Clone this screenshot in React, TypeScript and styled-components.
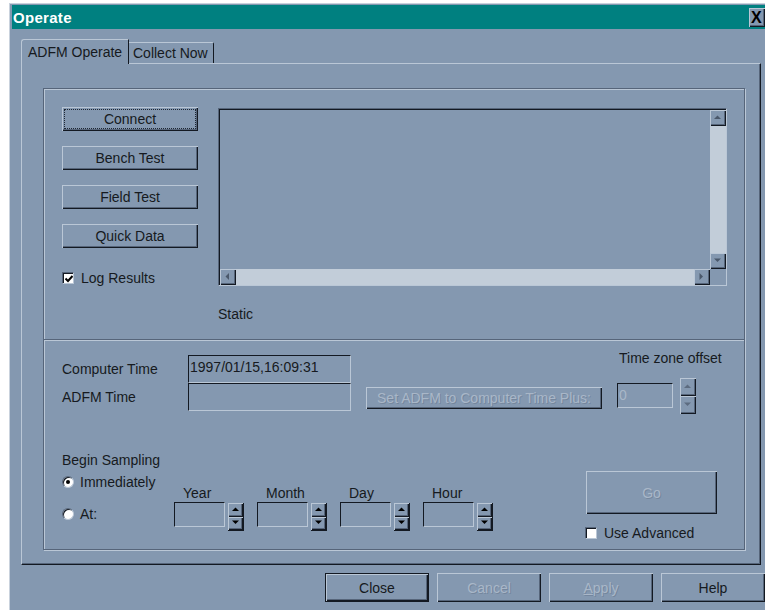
import styled, { createGlobalStyle, css } from "styled-components";

const face = "#8498b0";
const light = "#bac7d6";
const shadow = "#56657a";
const dark = "#131922";
const track = "#c2cdd9";
const grayText = "#a9b7c8";

const GlobalStyle = createGlobalStyle`
  html, body {
    margin: 0;
    background: #fff;
  }
  body {
    font-family: "Liberation Sans", Arial, sans-serif;
    font-size: 14px;
    color: #161a20;
  }
  * {
    box-sizing: border-box;
  }
`;

const raised = css`
  box-shadow: inset 1px 1px 0 ${light}, inset -1px -1px 0 ${dark},
    inset -2px -2px 0 ${shadow};
`;

const sunken = css`
  border: 1px solid;
  border-color: ${dark} ${light} ${light} ${dark};
`;

type Dir = "up" | "down" | "left" | "right";

function Arrow({ dir, color }: { dir: Dir; color: string }) {
  const pts = {
    up: "0,4 7,4 3.5,0.5",
    down: "0,0.5 7,0.5 3.5,4",
    left: "4,0 4,7 0.5,3.5",
    right: "0.5,0 0.5,7 4,3.5",
  }[dir];
  const wide = dir === "up" || dir === "down";
  return (
    <svg width={wide ? 7 : 5} height={wide ? 5 : 7} viewBox={wide ? "0 0 7 5" : "0 0 5 7"}>
      <polygon points={pts} fill={color} />
    </svg>
  );
}

export default function App() {
  return (
    <>
      <GlobalStyle />
      <Window>
        <TitleBar>
          <TitleText>Operate</TitleText>
          <CloseBox>X</CloseBox>
        </TitleBar>
        <Content>
          <TabStrip>
            <Tab $active $w={108}>ADFM Operate</Tab>
            <Tab $w={85}>Collect Now</Tab>
          </TabStrip>
          <TabPanel>
            <Frame>
              <UpperSection>
                <ActionColumn>
                  <Button $w={136} $h={24} $focus>Connect</Button>
                  <Button $w={136} $h={24}>Bench Test</Button>
                  <Button $w={136} $h={24}>Field Test</Button>
                  <Button $w={136} $h={24}>Quick Data</Button>
                  <CheckRow $top={7}>
                    <CheckBox>
                      <svg width="8" height="8" viewBox="0 0 8 8">
                        <path d="M0.5 3.5 L3 6 L7.5 1" stroke="#000" strokeWidth="2" fill="none" />
                      </svg>
                    </CheckBox>
                    Log Results
                  </CheckRow>
                </ActionColumn>
                <div>
                  <ListBox>
                    <ListArea />
                    <VScroll>
                      <ScrollBtn>
                        <Arrow dir="up" color="#4a586b" />
                      </ScrollBtn>
                      <Track />
                      <ScrollBtn>
                        <Arrow dir="down" color="#4a586b" />
                      </ScrollBtn>
                    </VScroll>
                    <HScroll>
                      <ScrollBtn>
                        <Arrow dir="left" color="#4a586b" />
                      </ScrollBtn>
                      <Track />
                      <ScrollBtn>
                        <Arrow dir="right" color="#4a586b" />
                      </ScrollBtn>
                    </HScroll>
                    <div />
                  </ListBox>
                  <StaticText>Static</StaticText>
                </div>
              </UpperSection>
              <Divider />
              <LowerSection>
                <TimeRow>
                  <TimeLabels>
                    <RowLabel>Computer Time</RowLabel>
                    <RowLabel>ADFM Time</RowLabel>
                  </TimeLabels>
                  <TimeBoxes>
                    <TimeBox>1997/01/15,16:09:31</TimeBox>
                    <TimeBox />
                  </TimeBoxes>
                  <SetButtonWrap>
                    <Button $w={236} $h={22} disabled>
                      Set ADFM to Computer Time Plus:
                    </Button>
                  </SetButtonWrap>
                  <ZoneColumn>
                    <ZoneLabel>Time zone offset</ZoneLabel>
                    <ZoneRow>
                      <EditBox $w={56} $h={25} $muted>0</EditBox>
                      <Spinner $h={36} $muted>
                        <SpinBtn>
                          <Arrow dir="up" color="#5d6c80" />
                        </SpinBtn>
                        <SpinBtn>
                          <Arrow dir="down" color="#5d6c80" />
                        </SpinBtn>
                      </Spinner>
                    </ZoneRow>
                  </ZoneColumn>
                </TimeRow>
                <SampleRow>
                  <RadioColumn>
                    <div>Begin Sampling</div>
                    <RadioRow $top={6}>
                      <Radio $checked />
                      Immediately
                    </RadioRow>
                    <RadioRow $top={16}>
                      <Radio />
                      At:
                    </RadioRow>
                  </RadioColumn>
                  <DateFields>
                    {["Year", "Month", "Day", "Hour"].map((f) => (
                      <DateField key={f}>
                        <DateLabel>{f}</DateLabel>
                        <EditBox $w={51} $h={25} />
                        <Spinner $h={28}>
                          <SpinBtn>
                            <Arrow dir="up" color="#000" />
                          </SpinBtn>
                          <SpinBtn>
                            <Arrow dir="down" color="#000" />
                          </SpinBtn>
                        </Spinner>
                      </DateField>
                    ))}
                  </DateFields>
                  <GoColumn>
                    <Button $w={131} $h={43} disabled>
                      Go
                    </Button>
                    <CheckRow $top={11} $left={-1}>
                      <CheckBox />
                      Use Advanced
                    </CheckRow>
                  </GoColumn>
                </SampleRow>
              </LowerSection>
            </Frame>
          </TabPanel>
          <DialogButtons>
            <Button $w={104} $h={29} $default>Close</Button>
            <Button $w={104} $h={29} disabled>Cancel</Button>
            <Button $w={104} $h={29} disabled>
              <u>A</u>pply
            </Button>
            <Button $w={104} $h={29}>Help</Button>
          </DialogButtons>
        </Content>
      </Window>
    </>
  );
}

const Window = styled.div`
  margin: 3px 0 0 9px;
  width: 756px;
  height: 607px;
  padding: 1px 0 0 2px;
  background: ${face};
  border-top: 1px solid #c9d2dd;
  border-left: 1px solid #c9d2dd;
  overflow: hidden;
  display: flex;
  flex-direction: column;
`;

const TitleBar = styled.div`
  height: 24px;
  flex: none;
  background: #008080;
  display: flex;
  align-items: flex-start;
  justify-content: space-between;
  padding-left: 1px;
`;

const TitleText = styled.div`
  margin-top: 4px;
  color: #fff;
  font-weight: 700;
  font-size: 15px;
  letter-spacing: 0.3px;
`;

const CloseBox = styled.div`
  margin-top: 3px;
  width: 16px;
  height: 19px;
  background: ${face};
  ${raised};
  font-weight: 700;
  font-size: 16px;
  line-height: 19px;
  padding-left: 2px;
  color: #000;
`;

const Content = styled.div`
  padding: 10px 0 0 9px;
`;

const TabStrip = styled.div`
  height: 25px;
  display: flex;
  align-items: flex-end;
  position: relative;
  z-index: 1;
  margin-bottom: -1px;
`;

const Tab = styled.div<{ $active?: boolean; $w: number }>`
  width: ${(p) => p.$w}px;
  background: ${face};
  white-space: nowrap;
  border-top: 1px solid ${light};
  border-right: 1px solid ${dark};
  display: flex;
  align-items: center;
  ${(p) =>
    p.$active
      ? css`
          height: 25px;
          padding: 0 0 1px 6px;
          border-left: 1px solid ${light};
          border-top-left-radius: 3px;
        `
      : css`
          height: 21px;
          margin-bottom: 1px;
          padding: 0 0 0 4px;
          border-top-right-radius: 2px;
        `}
`;

const TabPanel = styled.div`
  width: 740px;
  height: 502px;
  border-top: 1px solid ${light};
  border-left: 1px solid ${light};
  border-right: 1px solid ${dark};
  border-bottom: 1px solid ${dark};
  box-shadow: inset -1px -1px 0 ${shadow};
  padding: 24px 0 0 21px;
`;

const Frame = styled.div`
  width: 702px;
  height: 462px;
  border: 1px solid ${shadow};
  box-shadow: inset 1px 1px 0 ${light}, 1px 1px 0 ${light};
  display: flex;
  flex-direction: column;
`;

const UpperSection = styled.div`
  height: 250px;
  display: grid;
  grid-template-columns: 136px 509px;
  column-gap: 20px;
  align-items: start;
  padding: 18px 0 0 18px;
`;

const Divider = styled.div`
  height: 2px;
  border-top: 1px solid ${shadow};
  border-bottom: 1px solid ${light};
`;

const ActionColumn = styled.div`
  display: flex;
  flex-direction: column;
  gap: 15px;
`;

const Button = styled.button<{
  $w: number;
  $h: number;
  $default?: boolean;
  $focus?: boolean;
}>`
  width: ${(p) => p.$w}px;
  height: ${(p) => p.$h}px;
  flex: none;
  margin: 0;
  padding: 0;
  font: inherit;
  color: #161a20;
  background: ${face};
  border: none;
  ${raised};
  white-space: nowrap;
  ${(p) =>
    p.$default &&
    css`
      border: 1px solid ${dark};
    `}
  ${(p) =>
    p.$focus &&
    css`
      outline: 1px dotted #1f2733;
      outline-offset: -3px;
    `}
  &:disabled {
    color: ${grayText};
    text-shadow: 1px 1px 0 rgba(86, 101, 122, 0.35);
  }
  u {
    text-decoration-thickness: 1px;
  }
`;

const CheckRow = styled.div<{ $top: number; $left?: number }>`
  display: flex;
  align-items: center;
  gap: 7px;
  height: 16px;
  margin-top: ${(p) => p.$top}px;
  margin-left: ${(p) => p.$left ?? 0}px;
  white-space: nowrap;
`;

const CheckBox = styled.span`
  width: 12px;
  height: 12px;
  flex: none;
  background: #fff;
  border: 1px solid;
  border-color: ${shadow} ${light} ${light} ${shadow};
  box-shadow: inset 1px 1px 0 ${dark};
  display: flex;
  align-items: center;
  justify-content: center;
  padding: 1px 0 0 1px;
`;

const ListBox = styled.div`
  margin-top: 1px;
  height: 178px;
  display: grid;
  grid-template-columns: 1fr 16px;
  grid-template-rows: 1fr 16px;
  border: 1px solid;
  border-color: ${shadow} ${light} ${light} ${shadow};
  box-shadow: inset 1px 1px 0 ${dark};
  padding: 1px 0 0 1px;
`;

const ListArea = styled.div`
  background: ${face};
`;

const VScroll = styled.div`
  display: flex;
  flex-direction: column;
`;

const HScroll = styled.div`
  display: flex;
`;

const Track = styled.div`
  flex: 1;
  background: ${track};
`;

const ScrollBtn = styled.div`
  width: 16px;
  height: 16px;
  flex: none;
  background: ${face};
  ${raised};
  display: flex;
  align-items: center;
  justify-content: center;
  padding: 0 1px 1px 0;
`;

const StaticText = styled.div`
  margin-top: 20px;
  line-height: 16px;
`;

const LowerSection = styled.div`
  flex: 1;
  display: flex;
  flex-direction: column;
  padding: 9px 27px 0 18px;
`;

const TimeRow = styled.div`
  display: flex;
  align-items: flex-start;
  & > * {
    flex: none;
  }
`;

const TimeLabels = styled.div`
  width: 126px;
  margin-top: 5px;
  display: flex;
  flex-direction: column;
`;

const RowLabel = styled.div`
  height: 28px;
  display: flex;
  align-items: center;
`;

const TimeBoxes = styled.div`
  width: 163px;
  margin-top: 5px;
  display: flex;
  flex-direction: column;
`;

const TimeBox = styled.div`
  height: 28px;
  ${sunken};
  padding: 3px 0 0 1px;
  white-space: nowrap;
`;

const SetButtonWrap = styled.div`
  margin: 37px 0 0 15px;
`;

const ZoneColumn = styled.div`
  margin-left: 15px;
  display: flex;
  flex-direction: column;
`;

const ZoneLabel = styled.div`
  line-height: 16px;
  padding-left: 2px;
  white-space: nowrap;
`;

const ZoneRow = styled.div`
  margin-top: 11px;
  display: flex;
  align-items: center;
  gap: 7px;
`;

const EditBox = styled.div<{ $w: number; $h: number; $muted?: boolean }>`
  width: ${(p) => p.$w}px;
  height: ${(p) => p.$h}px;
  ${sunken};
  color: ${(p) => (p.$muted ? grayText : "inherit")};
  padding: 3px 0 0 1px;
`;

const Spinner = styled.div<{ $h: number; $muted?: boolean }>`
  width: 16px;
  height: ${(p) => p.$h}px;
  margin-top: 1px;
  display: flex;
  flex-direction: column;
  ${(p) =>
    !p.$muted &&
    css`
      border-right: 1px solid ${dark};
      border-bottom: 1px solid ${dark};
    `}
`;

const SpinBtn = styled.div`
  flex: 1;
  background: ${face};
  ${raised};
  display: flex;
  align-items: center;
  justify-content: center;
  padding: 0 1px 1px 0;
`;

const SampleRow = styled.div`
  margin-top: 38px;
  display: flex;
  align-items: flex-start;
`;

const RadioColumn = styled.div`
  width: 112px;
  flex: none;
  display: flex;
  flex-direction: column;
  line-height: 16px;
`;

const RadioRow = styled.div<{ $top: number }>`
  margin-top: ${(p) => p.$top}px;
  height: 16px;
  display: flex;
  align-items: center;
  gap: 6px;
`;

const Radio = styled.span<{ $checked?: boolean }>`
  width: 12px;
  height: 12px;
  flex: none;
  border-radius: 50%;
  background: #fff;
  border: 1px solid;
  border-color: ${shadow} ${light} ${light} ${shadow};
  box-shadow: inset 1px 1px 0 ${dark};
  display: flex;
  align-items: center;
  justify-content: center;
  &::after {
    content: "";
    width: 4px;
    height: 4px;
    border-radius: 50%;
    background: ${(p) => (p.$checked ? "#000" : "transparent")};
  }
`;

const DateFields = styled.div`
  margin-top: 33px;
  display: flex;
  gap: 13px;
`;

const DateField = styled.div`
  display: grid;
  grid-template-columns: 51px 16px;
  column-gap: 3px;
  align-items: start;
`;

const DateLabel = styled.div`
  grid-column: 1 / 3;
  height: 17px;
  line-height: 16px;
  padding-left: 9px;
`;

const GoColumn = styled.div`
  margin: 19px 0 0 auto;
  display: flex;
  flex-direction: column;
`;

const DialogButtons = styled.div`
  margin-top: 8px;
  display: flex;
  justify-content: flex-end;
  gap: 8px;
`;
